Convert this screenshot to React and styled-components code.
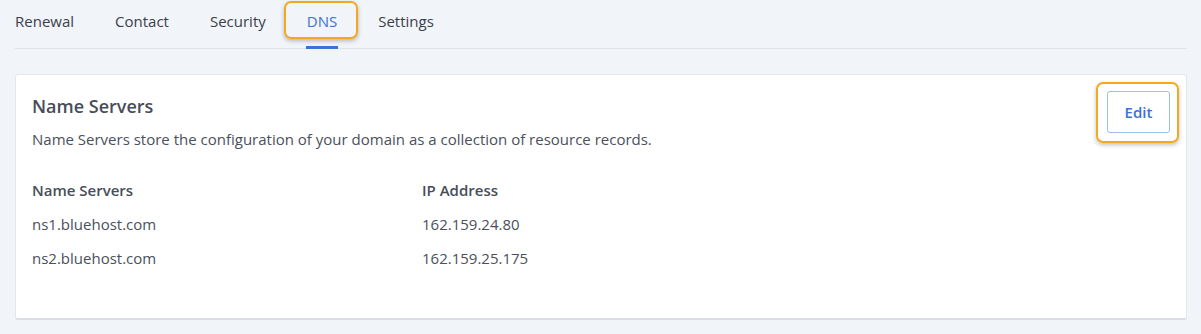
import React from 'react';
import styled, { createGlobalStyle } from 'styled-components';

const GlobalStyle = createGlobalStyle`
  body {
    margin: 0;
    background: #f1f4f8;
    font-family: "Open Sans", "Liberation Sans", sans-serif;
    color: #4a505c;
  }
`;

const Page = styled.div`
  padding: 0 14px 0 15px;
`;

const Tabs = styled.nav`
  display: flex;
  gap: 41px;
  height: 48px;
  border-bottom: 1px solid #dfe3e8;
`;

const Tab = styled.div`
  position: relative;
  display: flex;
  align-items: center;
  height: 42px;
  font-size: 15px;
  color: ${(p) => (p.active ? '#3a72d6' : '#3b414c')};

  &::after {
    content: '';
    display: ${(p) => (p.active ? 'block' : 'none')};
    position: absolute;
    left: -1px;
    right: -1px;
    bottom: -7px;
    height: 3px;
    background: #3a72d6;
  }
`;

const Highlight = styled.span`
  position: absolute;
  left: ${(p) => p.l}px;
  right: ${(p) => p.r}px;
  top: ${(p) => p.t}px;
  bottom: ${(p) => p.b}px;
  border: 2px solid #f3a81f;
  border-radius: 7px;
  box-shadow: 0 2px 4px rgba(0, 0, 0, 0.25);
  pointer-events: none;
`;

const Card = styled.section`
  position: relative;
  margin-top: 25px;
  height: 246px;
  background: #fff;
  border: 1px solid #e4e8ed;
  border-bottom: 2px solid #d9dfe6;
  border-radius: 3px;
  box-sizing: border-box;
  padding: 18px 16px 0 16px;
`;

const Header = styled.div`
  display: flex;
  justify-content: space-between;
  align-items: flex-start;
`;

const Title = styled.h2`
  margin: 1px 0 0;
  font-size: 18px;
  font-weight: 600;
  color: #474d59;
`;

const Desc = styled.p`
  margin: 11px 0 0;
  font-size: 15px;
  color: #4a505c;
`;

const EditWrap = styled.div`
  position: relative;
  margin: -2px 0 0;
`;

const EditButton = styled.button`
  width: 63px;
  height: 42px;
  background: #fff;
  border: 1px solid #9bbcef;
  border-radius: 3px;
  color: #3a72d6;
  font-family: inherit;
  font-size: 15px;
  font-weight: 600;
`;

const Table = styled.div`
  display: grid;
  grid-template-columns: 390px 1fr;
  margin-top: 31px;
  row-gap: 14px;
`;

const Cell = styled.div`
  font-size: 15px;
  line-height: 20px;
  font-weight: ${(p) => (p.head ? 600 : 400)};
  color: ${(p) => (p.head ? '#474d59' : '#4a505c')};
`;

const tabs = ['Renewal', 'Contact', 'Security', 'DNS', 'Settings'];
const rows = [
  ['ns1.bluehost.com', '162.159.24.80'],
  ['ns2.bluehost.com', '162.159.25.175'],
];

export default function App() {
  return (
    <>
      <GlobalStyle />
      <Page>
        <Tabs>
          {tabs.map((t) => (
            <Tab key={t} active={t === 'DNS'}>
              {t}
              {t === 'DNS' && <Highlight l={-23} r={-21} t={1} b={3} />}
            </Tab>
          ))}
        </Tabs>
        <Card>
          <Header>
            <div>
              <Title>Name Servers</Title>
              <Desc>Name Servers store the configuration of your domain as a collection of resource records.</Desc>
            </div>
            <EditWrap>
              <EditButton>Edit</EditButton>
              <Highlight l={-11} r={-9} t={-9} b={-10} />
            </EditWrap>
          </Header>
          <Table>
            <Cell head>Name Servers</Cell>
            <Cell head>IP Address</Cell>
            {rows.map(([n, ip]) => (
              <React.Fragment key={n}>
                <Cell>{n}</Cell>
                <Cell>{ip}</Cell>
              </React.Fragment>
            ))}
          </Table>
        </Card>
      </Page>
    </>
  );
}
